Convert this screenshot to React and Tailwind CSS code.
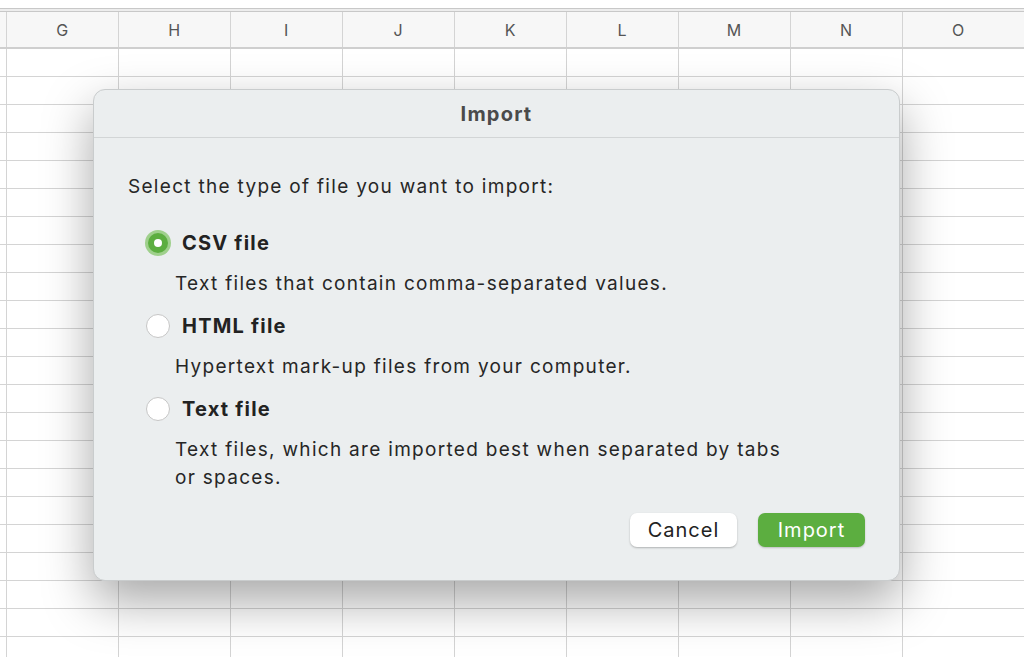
export default function App() {
  const cols = ["G","H","I","J","K","L","M","N","O"];
  const rows = Array.from({ length: 22 });
  return (
    <div className="relative w-[1024px] h-[657px] overflow-hidden bg-white" style={{ fontFamily: "Inter, 'Liberation Sans', sans-serif" }}>
      <div className="h-[8px] bg-white" />
      <div className="h-[4px] border-t border-b border-[#c8c8c8] bg-[#ededed]" />
      <div className="flex h-[37px] bg-[#f7f7f7] border-b-2 border-[#cfcfcf] pl-[6px]">
        {cols.map((c) => (
          <div key={c} className="w-[112px] shrink-0 border-l border-[#d4d4d4] flex items-center justify-center text-[16px] tracking-[0.05em] text-[#555]">{c}</div>
        ))}
      </div>
      {rows.map((_, i) => (
        <div key={i} className="flex h-[28px] border-b border-[#d4d4d4] pl-[6px]">
          {cols.map((c) => (
            <div key={c} className="w-[112px] shrink-0 border-l border-[#d4d4d4]" />
          ))}
        </div>
      ))}
      <div className="absolute left-[93px] top-[89px] w-[807px] h-[492px] rounded-[12px] bg-[#ebeeef] border border-[#c9cccd] shadow-[0_20px_50px_rgba(0,0,0,0.35)] flex flex-col">
        <div className="h-[48px] border-b border-[#d2d5d6] flex items-center justify-center text-[20px] tracking-[1.2px] font-bold text-[#4a4a4a]">Import</div>
        <div className="pl-[34px] pt-[35px] text-[19px] tracking-[1.3px] text-[#262626]">
          <div>Select the type of file you want to import:</div>
          <div className="pl-[18px] mt-[28px] flex flex-col">
            {[
              ["CSV file", "Text files that contain comma-separated values.", true],
              ["HTML file", "Hypertext mark-up files from your computer.", false],
              ["Text file", "Text files, which are imported best when separated by tabs or spaces.", false],
            ].map(([t, d, sel]) => (
              <div key={t} className="mb-[15px]">
                <div className="flex items-center h-[26px]">
                  {sel ? (
                    <div className="w-[26px] h-[26px] -ml-[1px] rounded-full bg-[#9fd08c] flex items-center justify-center">
                      <div className="w-[20px] h-[20px] rounded-full bg-[#5cae40] flex items-center justify-center">
                        <div className="w-[8px] h-[8px] rounded-full bg-white" />
                      </div>
                    </div>
                  ) : (
                    <div className="w-[24px] h-[24px] rounded-full bg-white border border-[#c6c6c6]" />
                  )}
                  <span className={"font-bold text-[20px] tracking-[1.2px] text-[#222] " + (sel ? "ml-[11px]" : "ml-[12px]")}>{t}</span>
                </div>
                <div className="ml-[29px] mt-[14px] w-[625px] leading-[28px]">{d}</div>
              </div>
            ))}
          </div>
        </div>
        <div className="flex justify-end gap-[21px] pr-[34px] mt-auto mb-[33px]">
          <button className="w-[107px] h-[34px] rounded-[7px] bg-white shadow-[0_1px_2px_rgba(0,0,0,0.25)] text-[20px] tracking-[1px] text-[#222]">Cancel</button>
          <button className="w-[107px] h-[34px] rounded-[7px] bg-[#5cae40] shadow-[0_1px_2px_rgba(0,0,0,0.2)] text-[20px] tracking-[1px] text-white">Import</button>
        </div>
      </div>
    </div>
  );
}
